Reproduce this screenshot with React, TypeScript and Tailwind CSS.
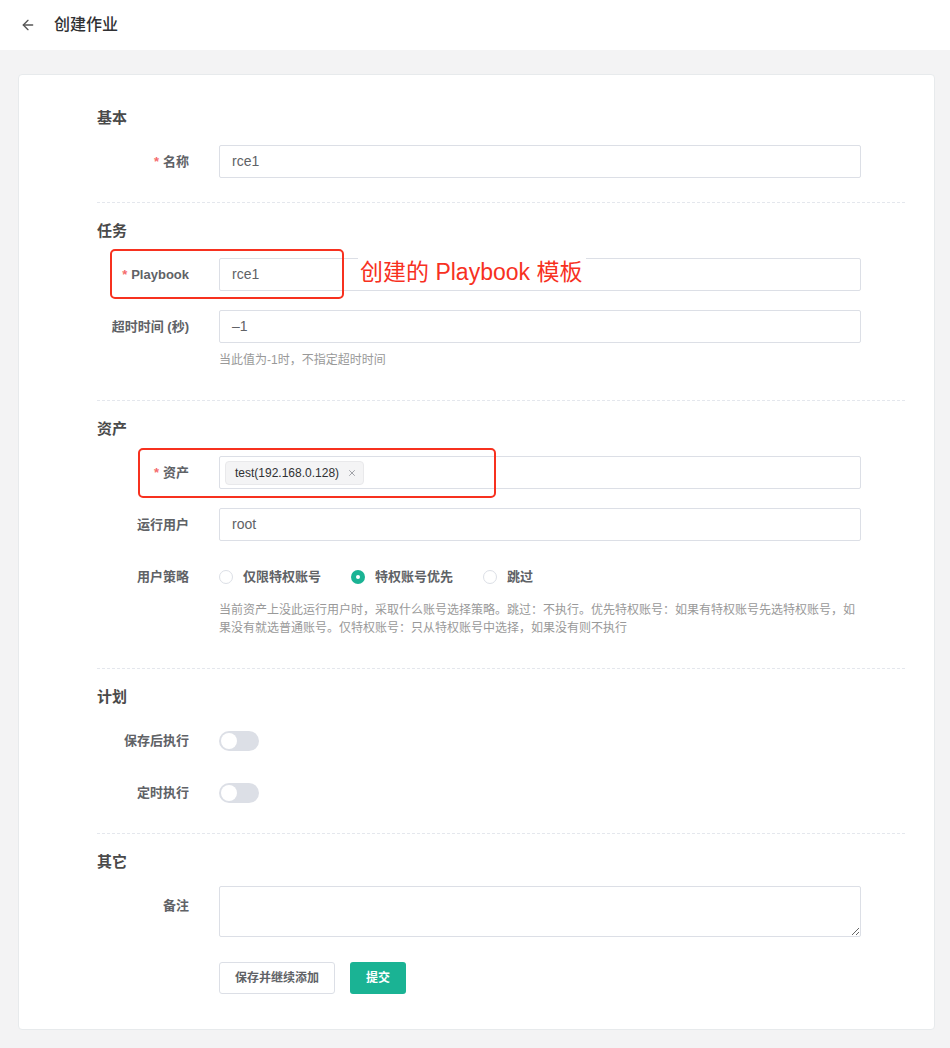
import { ArrowLeft, X } from 'lucide-react'

const font = { fontFamily: '"Liberation Sans", "Noto Sans CJK SC", sans-serif' }

function Label({ text, required, className = '' }: { text: string; required?: boolean; className?: string }) {
  return (
    <div className={`w-[122px] shrink-0 pr-[30px] h-[33px] flex items-center justify-end text-[13px] font-bold text-[#606266] ${className}`}>
      {required && <span className="text-[#f56c6c] mr-[4px]">*</span>}
      {text}
    </div>
  )
}

function Input({ value }: { value: string }) {
  return (
    <div className="w-[642px] h-[33px] border border-[#dcdfe6] rounded-[2px] bg-white flex items-center px-[12px] text-[14px] text-[#606266]">
      {value}
    </div>
  )
}

function Section({ title, first, children }: { title: string; first?: boolean; children: React.ReactNode }) {
  return (
    <div className={first ? 'pb-[24px]' : 'pt-[18px] pb-[24px] border-t border-dashed border-[#e4e7ed]'}>
      <div className="h-[20px] leading-[20px] text-[15px] font-bold text-[#4a4a4a] mb-[17px]">{title}</div>
      <div className="flex flex-col gap-[19px]">{children}</div>
    </div>
  )
}

function Help({ children, narrow }: { children: React.ReactNode; narrow?: boolean }) {
  return (
    <div className={`mt-[8px] mb-[7px] text-[12px] leading-[18px] text-[#999] ${narrow ? 'w-[640px]' : ''}`}>
      {children}
    </div>
  )
}

function Radio({ label, checked }: { label: string; checked?: boolean }) {
  return (
    <div className="flex items-center mr-[30px]">
      {checked ? (
        <span className="w-[14px] h-[14px] rounded-full bg-[#1ab394] flex items-center justify-center">
          <span className="w-[4px] h-[4px] rounded-full bg-white" />
        </span>
      ) : (
        <span className="w-[14px] h-[14px] rounded-full border border-[#dcdfe6] bg-white" />
      )}
      <span className="ml-[10px] text-[13px] font-bold text-[#606266]">{label}</span>
    </div>
  )
}

function Switch() {
  return (
    <div className="w-[40px] h-[20px] rounded-full bg-[#dcdfe6] relative">
      <span className="absolute left-[2px] top-[2px] w-[16px] h-[16px] rounded-full bg-white" />
    </div>
  )
}

export default function App() {
  return (
    <div className="min-h-[1048px] bg-[#f3f3f4]" style={font}>
      <div className="h-[50px] bg-white flex items-center px-[20px]">
        <ArrowLeft className="w-[16px] h-[16px] text-[#555]" strokeWidth={2} />
        <span className="ml-[18px] text-[16px] font-medium text-[#303133]">创建作业</span>
      </div>

      <div className="pt-[24px] pl-[18px] pr-[15px] pb-[18px]">
        <div className="bg-white border border-[#e7eaec] rounded-[4px] pt-[33px] pl-[78px] pr-[29px] pb-[35px]">
          <Section title="基本" first>
            <div className="flex">
              <Label text="名称" required />
              <Input value="rce1" />
            </div>
          </Section>

          <Section title="任务">
            <div className="flex relative">
              <Label text="Playbook" required />
              <Input value="rce1" />
              <div className="absolute left-[13px] top-[-9px] w-[234px] h-[50px] border-[2.5px] border-[#f7311f] rounded-[5px]" />
              <div className="absolute left-[261px] top-[-1px] text-[23px] leading-[30px] text-[#f7311f] bg-white pr-[4px] pl-[2px]">
                创建的 Playbook 模板
              </div>
            </div>
            <div className="flex">
              <Label text="超时时间 (秒)" />
              <div>
                <Input value="–1" />
                <Help>当此值为-1时，不指定超时时间</Help>
              </div>
            </div>
          </Section>

          <Section title="资产">
            <div className="flex relative">
              <Label text="资产" required />
              <div className="w-[642px] h-[33px] border border-[#dcdfe6] rounded-[2px] flex items-center px-[5px]">
                <span className="h-[24px] flex items-center bg-[#f4f4f5] border border-[#e9e9eb] rounded-[4px] pl-[9px] pr-[6px] text-[12px] text-[#303133]">
                  test(192.168.0.128)
                  <X className="w-[10px] h-[10px] ml-[8px] text-[#909399]" strokeWidth={2} />
                </span>
              </div>
              <div className="absolute left-[41px] top-[-8px] w-[358px] h-[50px] border-[2.5px] border-[#f7311f] rounded-[5px]" />
            </div>
            <div className="flex">
              <Label text="运行用户" />
              <Input value="root" />
            </div>
            <div className="flex">
              <Label text="用户策略" />
              <div>
                <div className="h-[33px] flex items-center">
                  <Radio label="仅限特权账号" />
                  <Radio label="特权账号优先" checked />
                  <Radio label="跳过" />
                </div>
                <Help narrow>
                  当前资产上没此运行用户时，采取什么账号选择策略。跳过：不执行。优先特权账号：如果有特权账号先选特权账号，如果没有就选普通账号。仅特权账号：只从特权账号中选择，如果没有则不执行
                </Help>
              </div>
            </div>
          </Section>

          <Section title="计划">
            <div className="flex">
              <Label text="保存后执行" />
              <div className="h-[33px] flex items-center">
                <Switch />
              </div>
            </div>
            <div className="flex">
              <Label text="定时执行" />
              <div className="h-[33px] flex items-center">
                <Switch />
              </div>
            </div>
          </Section>

          <div className="pt-[18px] border-t border-dashed border-[#e4e7ed]">
            <div className="h-[20px] leading-[20px] text-[15px] font-bold text-[#4a4a4a] mb-[14px]">其它</div>
            <div className="flex">
              <Label text="备注" className="mt-[3px]" />
              <textarea className="w-[642px] h-[51px] border border-[#dcdfe6] rounded-[2px] outline-none resize-y" />
            </div>
            <div className="flex mt-[25px] pl-[122px] gap-[15px]">
              <button className="h-[32px] px-[15px] border border-[#dcdfe6] rounded-[3px] bg-white text-[12px] text-[#606266] font-bold">
                保存并继续添加
              </button>
              <button className="h-[32px] px-[16px] rounded-[3px] bg-[#1ab394] text-[12px] text-white font-bold">
                提交
              </button>
            </div>
          </div>
        </div>
      </div>
    </div>
  )
}
